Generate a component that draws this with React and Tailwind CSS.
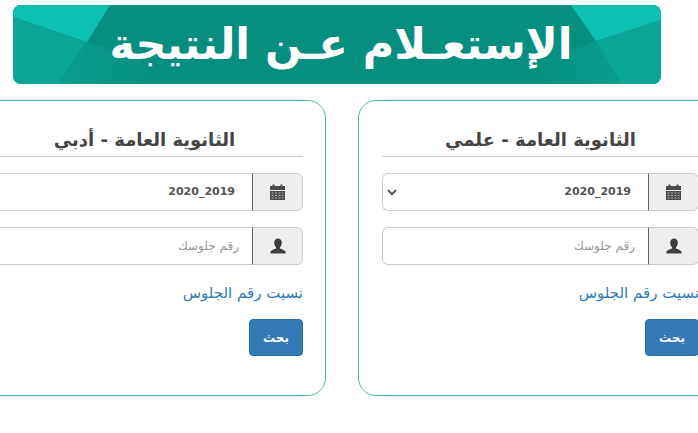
import React from "react";

const CalendarIcon = () => (
  <svg width="15" height="16" viewBox="0 0 15 16" aria-hidden="true">
    <path fill="#4a4a4a" d="M0 2h2.500V0.500h2V2h6V0.500h2V2H15v4H0z" />
    <rect x="0" y="7" width="15" height="9" fill="#4a4a4a" />
    <g fill="#b5b5b5">
      <rect x="1.500" y="8.500" width="2" height="1" />
      <rect x="5" y="8.500" width="2" height="1" />
      <rect x="8.500" y="8.500" width="2" height="1" />
      <rect x="12" y="8.500" width="1.500" height="1" />
      <rect x="1.500" y="11" width="2" height="1" />
      <rect x="5" y="11" width="2" height="1" />
      <rect x="8.500" y="11" width="2" height="1" />
      <rect x="12" y="11" width="1.500" height="1" />
      <rect x="1.500" y="13.500" width="2" height="1" />
      <rect x="5" y="13.500" width="2" height="1" />
      <rect x="8.500" y="13.500" width="2" height="1" />
      <rect x="12" y="13.500" width="1.500" height="1" />
    </g>
  </svg>
);

const UserIcon = () => (
  <svg width="16" height="16" viewBox="0 0 16 16" aria-hidden="true">
    <path
      fill="#3f3f3f"
      d="M8 0.500c2.400 0 3.800 1.800 3.800 4.200 0 1.900-.8 3.600-1.800 4.500v1.300c1 .7 5.200 1.400 5.600 3.600V15.500H.4v-1.400c.4-2.200 4.600-2.900 5.600-3.600V9.200C5 8.300 4.200 6.600 4.200 4.700 4.200 2.300 5.600.5 8 .5z"
    />
  </svg>
);

const Chevron = () => (
  <svg width="10" height="7" viewBox="0 0 10 7" aria-hidden="true">
    <path d="M1 1.200 5 5.200 9 1.200" fill="none" stroke="#444" strokeWidth="1.800" />
  </svg>
);

const Addon = ({ children }) => (
  <div className="flex w-[50px] shrink-0 items-center justify-center rounded-r-[6px] border border-l-0 border-[#ccc] bg-[#eee]">
    {children}
  </div>
);

const Card = ({ title, showChevron }) => (
  <div dir="rtl" className="h-[296px] w-[364px] shrink-0 rounded-[18px] border-[1.500px] border-[#4fb8aa] bg-white pt-[23px] pr-[22px] pl-[23px]">
    <h2 className="h-[33px] border-b border-[#ccc] text-center text-[18px] leading-[31px] font-bold text-[#444]">
      {title}
    </h2>
    <div className="mt-[16px] flex h-[38px]">
      <Addon>
        <CalendarIcon />
      </Addon>
      <div className="flex flex-1 items-center justify-between rounded-l-[6px] border border-[#ccc] border-r-[#666] bg-white pr-[17px] pl-[4px]">
        <span className="text-[11px] font-bold text-[#555]" dir="ltr">
          2020_2019
        </span>
        {showChevron && <Chevron />}
      </div>
    </div>
    <div className="mt-[16px] flex h-[38px]">
      <Addon>
        <UserIcon />
      </Addon>
      <input
        type="text"
        dir="rtl"
        placeholder="رقم جلوسك"
        className="min-w-0 flex-1 rounded-l-[6px] border border-[#ccc] border-r-[#666] bg-white pr-[13px] text-[12px] outline-none placeholder:text-[#999]"
      />
    </div>
    <div className="mt-[18px] text-[15px] leading-[20px] text-[#337ab7]">نسيت رقم الجلوس</div>
    <div className="mt-[16px] flex justify-start">
      <button className="h-[37px] w-[54px] rounded-[4px] border border-[#2e6da4] bg-[#337ab7] text-[12px] font-bold text-white">
        بحث
      </button>
    </div>
  </div>
);

export default function App() {
  return (
    <div className="h-[433px] w-[698px] overflow-hidden bg-white pt-[5px] font-['DejaVu_Sans',sans-serif]">
      <div className="relative ml-[13px] flex h-[79px] w-[648px] items-center justify-center overflow-hidden rounded-[8px] bg-[#068e7f]">
        <svg className="absolute inset-0" width="648" height="79" viewBox="0 0 648 79" aria-hidden="true">
          <defs>
            <linearGradient id="fadeL" x1="0" x2="1" y1="0" y2="0">
              <stop offset="0" stopColor="#0a9f8f" />
              <stop offset="1" stopColor="#068e7f" />
            </linearGradient>
            <linearGradient id="fadeR" x1="1" x2="0" y1="0" y2="0">
              <stop offset="0" stopColor="#0a9f8f" />
              <stop offset="1" stopColor="#068e7f" />
            </linearGradient>
          </defs>
          <polygon points="74,37 44,79 143,79 143,60" fill="url(#fadeL)" />
          <polygon points="0,0 97,0 74,37 0,12" fill="#0cc1b1" />
          <polygon points="0,12 74,37 44,79 0,79" fill="#0aa797" />
          <polygon points="583,36 609,79 526,79 524,58" fill="url(#fadeR)" />
          <polygon points="558,0 648,0 648,15 583,36" fill="#0cc1b1" />
          <polygon points="583,36 648,15 648,79 609,79" fill="#0aa797" />
        </svg>
        <span dir="rtl" className="relative ml-[8px] text-[43px] leading-none font-bold text-white">
          الإستعـلام عـن النتيجة
        </span>
      </div>
      <div className="mt-[16px] ml-[-38px] flex gap-[32px]">
        <Card title="الثانوية العامة - أدبي" />
        <Card title="الثانوية العامة - علمي" showChevron />
      </div>
    </div>
  );
}
